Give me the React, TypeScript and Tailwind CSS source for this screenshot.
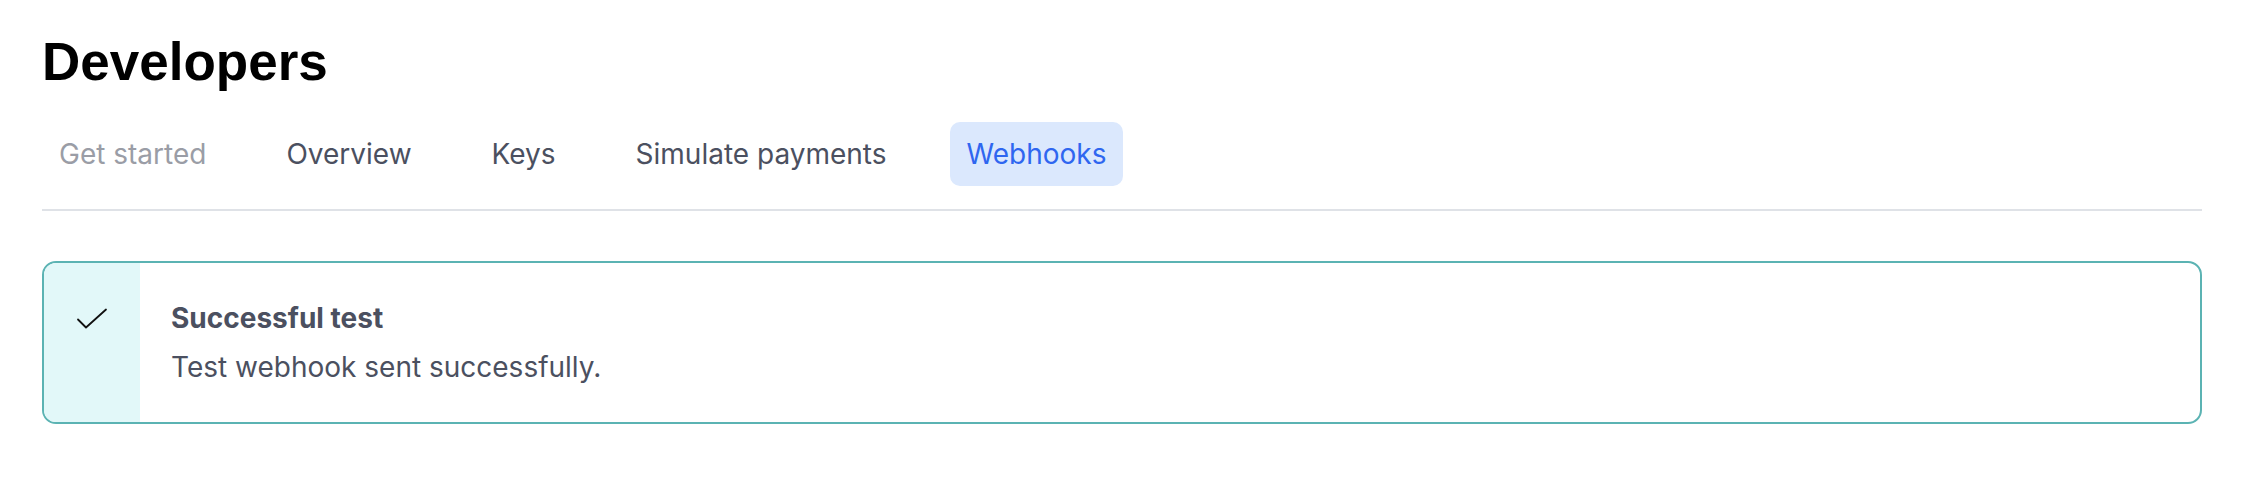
import React from "react";

const tabs = [
  { label: "Get started", cls: "text-[#9a9da6]" },
  { label: "Overview", cls: "text-[#4b5060]" },
  { label: "Keys", cls: "text-[#4b5060]" },
  { label: "Simulate payments", cls: "text-[#4b5060]" },
  { label: "Webhooks", cls: "text-[#2f66f0] bg-[#dbe8fd]" },
];

export default function App() {
  return (
    <div className="min-h-[498px] bg-white pl-[42px] pr-[58px] pt-[35px] font-['Inter','Noto_Sans',sans-serif]">
      <h1 className="font-['Liberation_Sans','Arial',sans-serif] font-bold text-[53px] leading-[53px] text-black">
        Developers
      </h1>
      <nav className="mt-[34px] flex items-center gap-[46px] pb-[23px] border-b-2 border-[#dfe2e7]">
        {tabs.map((t) => (
          <div
            key={t.label}
            className={`h-[64px] px-[17px] flex items-center rounded-[10px] text-[28px] leading-[42px] ${t.cls}`}
          >
            {t.label}
          </div>
        ))}
      </nav>
      <div className="mt-[50px] flex border-2 border-[#5bb3b3] rounded-[14px] overflow-hidden">
        <div className="w-[96px] shrink-0 bg-[#e2f8f9] flex justify-center pt-[38px]">
          <div className="h-[35px] flex items-center">
            <svg width="32" height="22" viewBox="0 0 32 22" fill="none">
              <path d="M2 11.5 L10 19.5 L30 1.5" stroke="#111" strokeWidth="1.8" strokeLinecap="round" strokeLinejoin="round" />
            </svg>
          </div>
        </div>
        <div className="pl-[31px] pt-[38px] pb-[34px] text-[#4b5060]">
          <div className="text-[28px] leading-[35px] font-bold">Successful test</div>
          <div className="mt-[10px] text-[28px] leading-[42px]">Test webhook sent successfully.</div>
        </div>
      </div>
    </div>
  );
}
